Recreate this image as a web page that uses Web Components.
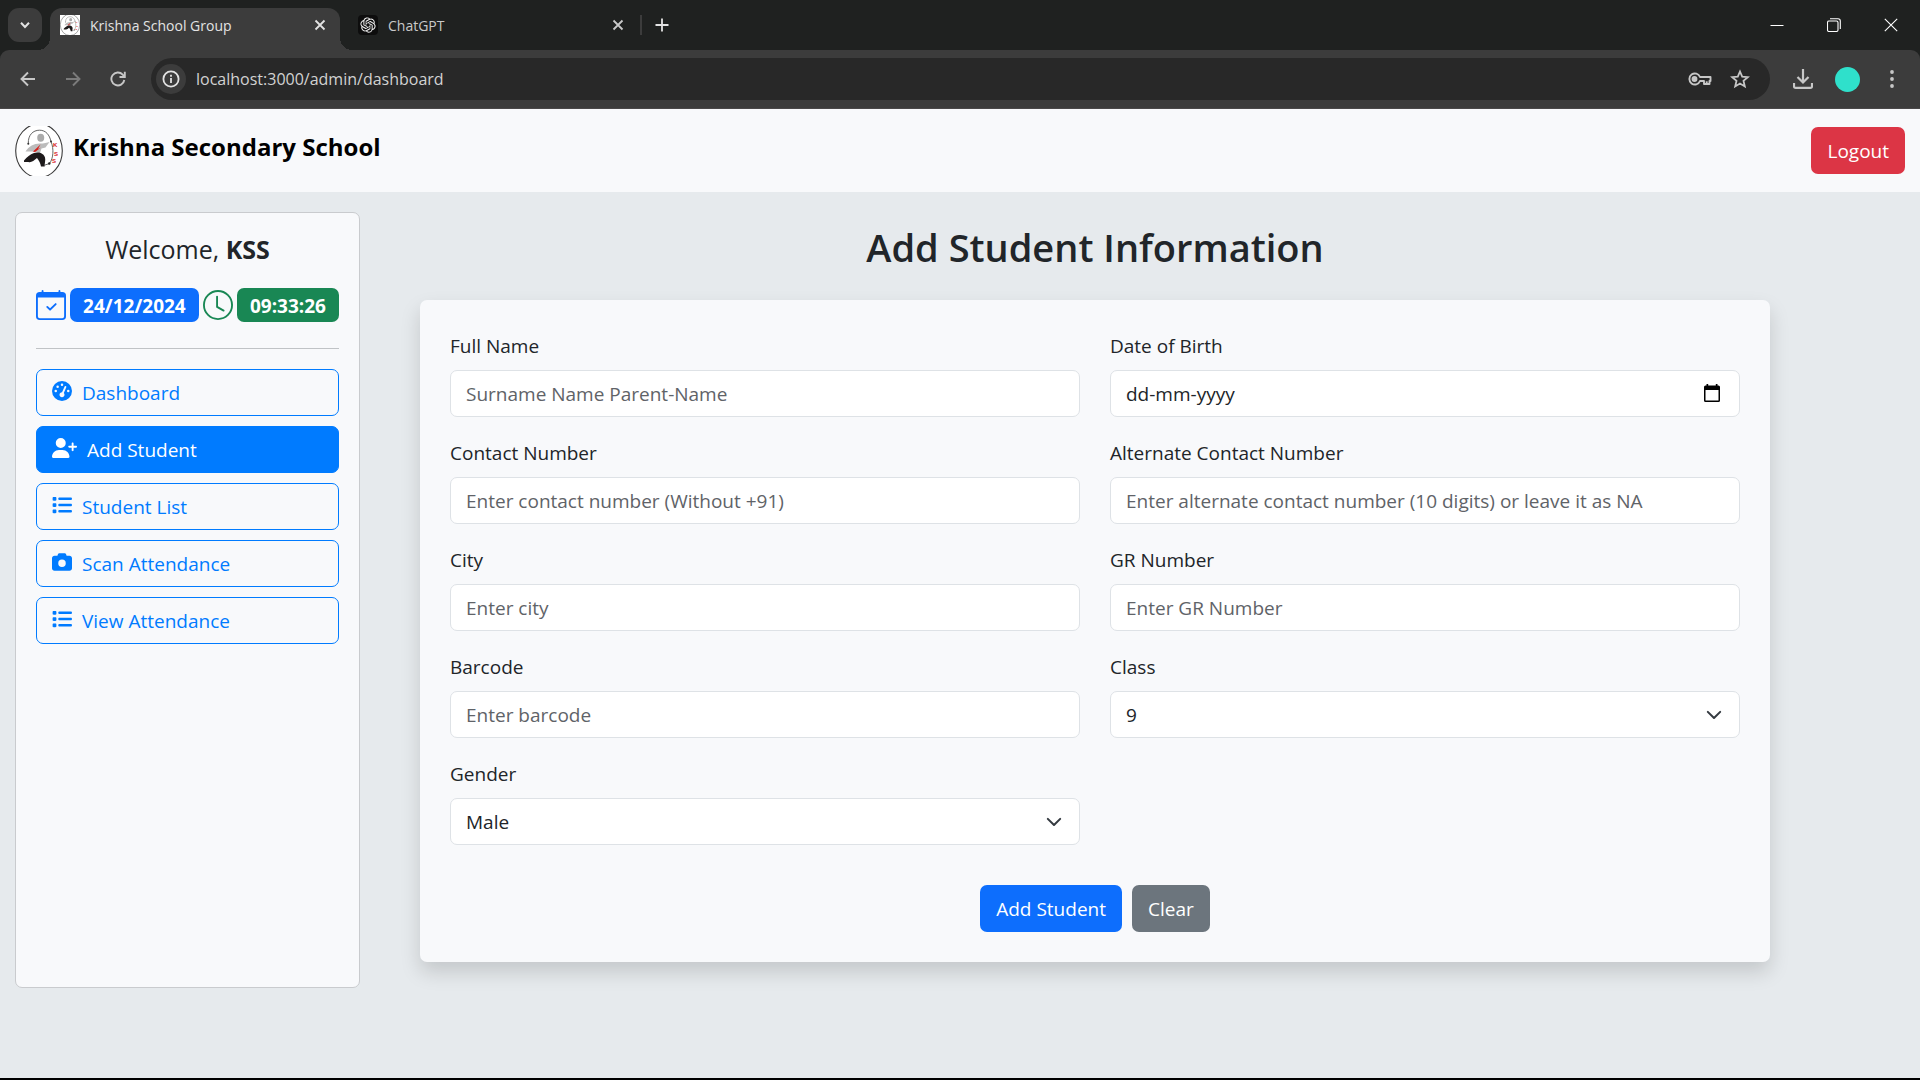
<!DOCTYPE html>
<html lang="en">
<head>
<meta charset="utf-8">
<title>Krishna School Group</title>
<style>
:root{--ui:"Open Sans","Noto Sans",sans-serif;--text:19px;--ink:#212529;--panel:#f8f9fb;--primary:#0d6efd;--nav:#007bff}
html,body{margin:0;height:100%}
body{font-family:var(--ui);font-size:var(--text);line-height:30px;color:var(--ink);background:#e6eaed}
</style>
</head>
<body>
<app-window>
  <tab-strip slot="chrome">
    <browser-tab icon="school" active>Krishna School Group</browser-tab>
    <browser-tab icon="gpt">ChatGPT</browser-tab>
  </tab-strip>
  <browser-toolbar slot="chrome" url="localhost:3000/admin/dashboard"></browser-toolbar>
  <site-header>Krishna Secondary School</site-header>
  <page-layout>
    <side-bar slot="side" user="KSS" date="24/12/2024" time="09:33:26">
      <nav-link icon="gauge">Dashboard</nav-link>
      <nav-link icon="userplus" active>Add Student</nav-link>
      <nav-link icon="list">Student List</nav-link>
      <nav-link icon="camera">Scan Attendance</nav-link>
      <nav-link icon="list">View Attendance</nav-link>
    </side-bar>
    <student-form heading="Add Student Information">
      <form-field label="Full Name" hint="Surname Name Parent-Name"></form-field>
      <form-field label="Date of Birth" kind="date" hint="dd-mm-yyyy"></form-field>
      <form-field label="Contact Number" hint="Enter contact number (Without +91)"></form-field>
      <form-field label="Alternate Contact Number" hint="Enter alternate contact number (10 digits) or leave it as NA"></form-field>
      <form-field label="City" hint="Enter city"></form-field>
      <form-field label="GR Number" hint="Enter GR Number"></form-field>
      <form-field label="Barcode" hint="Enter barcode"></form-field>
      <form-field label="Class" kind="select" options="9,10,11,12"></form-field>
      <form-field label="Gender" kind="select" options="Male,Female"></form-field>
      <action-button slot="actions" tone="primary">Add Student</action-button>
      <action-button slot="actions" tone="secondary">Clear</action-button>
    </student-form>
  </page-layout>
</app-window>
<script>
const svg = (w, h, box, body, extra = '') => `<svg width="${w}" height="${h}" viewBox="${box}" aria-hidden="true" ${extra}>${body}</svg>`;
const line = (w, h, box, body, sw = 2) => svg(w, h, box, body, `fill="none" stroke="currentColor" stroke-width="${sw}"`);
const fill = (w, h, box, d) => svg(w, h, box, `<path d="${d}"/>`, 'fill="currentColor"');
const schoolArt = `
  <ellipse cx="24" cy="24.7" rx="23.3" ry="26.8" fill="#fff" stroke="#3a3a3a" stroke-width="1.1"/>
  <path d="M13.3 17.5C13 9 18 4.200 24.500 4.200C31 4.200 34.500 9 36 15.500C39 23 38.500 32 34.500 37.500L30 39" fill="none" stroke="#555" stroke-width=".9"/>
  <circle cx="13.300" cy="17.800" r="1" fill="#333"/><circle cx="36" cy="15.500" r="1" fill="#333"/><circle cx="34.300" cy="37.500" r="1.200" fill="#222"/>
  <ellipse cx="25.700" cy="11.700" rx="3.500" ry="4" fill="#aaa"/>
  <path d="M10.500 25.500C14 20.500 19 17.500 25 17.600C29 17.600 32 16.500 34.500 16L30.500 21.500L26.500 22.500L25 27L17 25.500Z" fill="#bcbcbc"/>
  <path d="M18 25.500L25.500 18.500L23 23L26 21.500L20 26Z" fill="#d8201c"/>
  <path d="M9 34.500C12 31 15 28.500 19 27C24 25.300 29 27.500 30 31.500C30.800 34.500 29.500 37 29.700 40.500L26 40.500C25.500 37.500 24 34.500 22 32C19 34.500 16 37 13.500 36L9 36Z" fill="#1e1a1b"/>
  <g fill="#d8201c" font-family="Liberation Sans, sans-serif" font-weight="700" font-size="6"><text x="38" y="21">K</text><text x="39" y="30">S</text><text x="37" y="37">S</text></g>`;
const ICONS = {
  school: svg(20, 20, '0 0 48 50', `<rect width="48" height="50" fill="#fff"/>${schoolArt}`, 'preserveAspectRatio="none"'),
  logo: svg(48, 50, '0 0 48 50', schoolArt),
  gpt: svg(20, 20, '0 0 20 20', '<rect width="20" height="20" rx="4" fill="#0d0d0d"/><path transform="translate(2.400 2.400) scale(.635)" fill="#f2f2f2" d="M22.2819 9.8211a5.9847 5.9847 0 0 0-.5157-4.9108 6.0462 6.0462 0 0 0-6.5098-2.9A6.0651 6.0651 0 0 0 4.9807 4.1818a5.9847 5.9847 0 0 0-3.9977 2.9 6.0462 6.0462 0 0 0 .7427 7.0966 5.98 5.98 0 0 0 .511 4.9107 6.051 6.051 0 0 0 6.5146 2.9001A5.9847 5.9847 0 0 0 13.2599 24a6.0557 6.0557 0 0 0 5.7718-4.2058 5.9894 5.9894 0 0 0 3.9977-2.9001 6.0557 6.0557 0 0 0-.7475-7.0729zm-9.022 12.6081a4.4755 4.4755 0 0 1-2.8764-1.0408l.1419-.0804 4.7783-2.7582a.7948.7948 0 0 0 .3927-.6813v-6.7369l2.02 1.1686a.071.071 0 0 1 .038.052v5.5826a4.504 4.504 0 0 1-4.4945 4.4944zm-9.6607-4.1254a4.4708 4.4708 0 0 1-.5346-3.0137l.142.0852 4.783 2.7582a.7712.7712 0 0 0 .7806 0l5.8428-3.3685v2.3324a.0804.0804 0 0 1-.0332.0615L9.74 19.9502a4.4992 4.4992 0 0 1-6.1408-1.6464zM2.3408 7.8956a4.485 4.485 0 0 1 2.3655-1.9728V11.6a.7664.7664 0 0 0 .3879.6765l5.8144 3.3543-2.0201 1.1685a.0757.0757 0 0 1-.071 0l-4.8303-2.7865A4.504 4.504 0 0 1 2.3408 7.872zm16.5963 3.8558L13.1038 8.364 15.1192 7.2a.0757.0757 0 0 1 .071 0l4.8303 2.7913a4.4944 4.4944 0 0 1-.6765 8.1042v-5.6772a.79.79 0 0 0-.407-.667zm2.0107-3.0231l-.142-.0852-4.7735-2.7818a.7759.7759 0 0 0-.7854 0L9.409 9.2297V6.8974a.0662.0662 0 0 1 .0284-.0615l4.8303-2.7866a4.4992 4.4992 0 0 1 6.6802 4.66zM8.3065 12.863l-2.02-1.1638a.0804.0804 0 0 1-.038-.0567V6.0742a4.4992 4.4992 0 0 1 7.3757-3.4537l-.142.0805L8.704 5.459a.7948.7948 0 0 0-.3927.6813zm1.0976-2.3654l2.602-1.4998 2.6069 1.4998v2.9994l-2.5974 1.4997-2.6067-1.4997Z"/>'),
  down: line(12, 12, '0 0 12 12', '<path d="M2 3.800L6 8L10 3.800"/>'),
  close: line(12, 12, '0 0 12 12', '<path d="M1.500 1.500L10.500 10.500M10.500 1.500L1.500 10.500"/>', 1.8),
  plus: line(14, 14, '0 0 14 14', '<path d="M7 0.500V13.500M0.500 7H13.500"/>', 1.8),
  min: line(14, 14, '0 0 14 14', '<path d="M0.500 7.500H13.500"/>', 1),
  restore: line(14, 14, '0 0 14 14', '<rect x="0.500" y="3" width="10.500" height="10.500" rx="1.500"/><path d="M3 .8H11Q13.300 .8 13.300 3V11"/>', 1.1),
  winclose: line(14, 14, '0 0 14 14', '<path d="M0.800 0.800L13.200 13.200M13.200 0.800L0.800 13.200"/>', 1.1),
  back: line(16, 16, '0 0 16 16', '<path d="M15 8H1.800M8 1.500L1.500 8L8 14.500"/>', 1.9),
  fwd: line(16, 16, '0 0 16 16', '<path d="M1 8H14.200M8 1.500L14.500 8L8 14.500"/>', 1.9),
  reload: line(16, 16, '0 0 16 16', '<path d="M14.300 9A6.500 6.500 0 1 1 12.700 3.600L14.500 5.500M14.800 .8V6H9.500"/>', 1.9),
  info: line(18, 18, '0 0 18 18', '<circle cx="9" cy="9" r="7.600"/><path d="M9 8V13M9 4.800V6.700"/>', 1.8),
  key: line(24, 16, '0 0 24 16', '<path d="M12 6A5.500 5.500 0 1 0 12 10H16V13H21.500V10H22.500V6Z" stroke-linejoin="round"/><circle cx="6.500" cy="8" r="2" fill="currentColor"/><path d="M18.700 13V10.300"/>', 1.9),
  star: line(20, 20, '0 0 20 20', '<path d="M10 2.500L12.200 7.700L17.800 8.200L13.500 11.900L14.800 17.400L10 14.500L5.200 17.400L6.500 11.900L2.200 8.200L7.800 7.700Z"/>', 1.8),
  download: line(20, 20, '0 0 20 20', '<path d="M10 0V13M4.500 8L10 13.500L15.500 8M1 14V17.500Q1 18.800 2.500 18.800H17.500Q19 18.800 19 17.500V14"/>', 2.2),
  dots: svg(4, 18, '0 0 4 18', '<circle cx="2" cy="2" r="1.900"/><circle cx="2" cy="9" r="1.900"/><circle cx="2" cy="16" r="1.900"/>', 'fill="currentColor"'),
  calcheck: fill(30, 30, '0 0 16 16', 'M10.854 7.146a.5.5 0 0 1 0 .708l-3 3a.5.5 0 0 1-.708 0l-1.500-1.500a.5.5 0 1 1 .708-.708L7.500 9.793l2.646-2.647a.5.5 0 0 1 .708 0zM3.500 0a.5.5 0 0 1 .5.5V1h8V.5a.5.5 0 0 1 1 0V1h1a2 2 0 0 1 2 2v11a2 2 0 0 1-2 2H2a2 2 0 0 1-2-2V3a2 2 0 0 1 2-2h1V.5a.5.5 0 0 1 .5-.5zM1 4v10a1 1 0 0 0 1 1h12a1 1 0 0 0 1-1V4z'),
  clock: fill(30, 30, '0 0 16 16', 'M8 3.500a.5.5 0 0 0-1 0V9a.5.5 0 0 0 .252.434l3.500 2a.5.5 0 0 0 .496-.868L8 8.710zM8 16A8 8 0 1 0 8 0a8 8 0 0 0 0 16zm7-8A7 7 0 1 1 1 8a7 7 0 0 1 14 0z'),
  gauge: fill(20, 20, '0 0 512 512', 'M0 256a256 256 0 1 1 512 0A256 256 0 1 1 0 256zM288 96a32 32 0 1 0 -64 0 32 32 0 1 0 64 0zM256 416c35.300 0 64-28.700 64-64c0-17.400-6.900-33.100-18.100-44.600L366 161.700c5.300-12.100-.2-26.300-12.300-31.600s-26.300 .2-31.600 12.300L257.900 288c-.6 0-1.300 0-1.900 0c-35.300 0-64 28.700-64 64s28.700 64 64 64zM176 144a32 32 0 1 0 -64 0 32 32 0 1 0 64 0zM96 288a32 32 0 1 0 0-64 32 32 0 1 0 0 64zm352-32a32 32 0 1 0 -64 0 32 32 0 1 0 64 0z'),
  userplus: fill(25, 20, '0 0 640 512', 'M96 128a128 128 0 1 1 256 0A128 128 0 1 1 96 128zM0 482.300C0 383.800 79.800 304 178.300 304h91.400C368.200 304 448 383.800 448 482.300c0 16.400-13.300 29.700-29.700 29.700H29.700C13.300 512 0 498.700 0 482.300zM504 312V248H440c-13.300 0-24-10.700-24-24s10.700-24 24-24h64V136c0-13.300 10.700-24 24-24s24 10.700 24 24v64h64c13.300 0 24 10.700 24 24s-10.700 24-24 24H552v64c0 13.300-10.700 24-24 24s-24-10.700-24-24z'),
  list: fill(20, 20, '0 0 512 512', 'M40 48C26.700 48 16 58.700 16 72v48c0 13.300 10.700 24 24 24H88c13.300 0 24-10.700 24-24V72c0-13.300-10.700-24-24-24H40zM192 64c-17.700 0-32 14.300-32 32s14.300 32 32 32H480c17.700 0 32-14.300 32-32s-14.300-32-32-32H192zm0 160c-17.700 0-32 14.300-32 32s14.300 32 32 32H480c17.700 0 32-14.300 32-32s-14.300-32-32-32H192zm0 160c-17.700 0-32 14.300-32 32s14.300 32 32 32H480c17.700 0 32-14.300 32-32s-14.300-32-32-32H192zM16 232v48c0 13.300 10.700 24 24 24H88c13.300 0 24-10.700 24-24V232c0-13.300-10.700-24-24-24H40c-13.300 0-24 10.700-24 24zM40 368c-13.300 0-24 10.700-24 24v48c0 13.300 10.700 24 24 24H88c13.300 0 24-10.700 24-24V392c0-13.300-10.700-24-24-24H40z'),
  camera: fill(20, 20, '0 0 512 512', 'M149.100 64.800L138.700 96H64C28.700 96 0 124.700 0 160V416c0 35.300 28.700 64 64 64H448c35.300 0 64-28.700 64-64V160c0-35.300-28.700-64-64-64H373.300L362.900 64.800C356.400 45.200 338.100 32 317.400 32H194.600c-20.700 0-39 13.200-45.500 32.800zM256 192a96 96 0 1 1 0 192 96 96 0 1 1 0-192z'),
  calendar: svg(16, 18, '0 0 16 18', '<path fill-rule="evenodd" d="M2.500 0H4.200V1.500H11.800V0H13.500V1.500H14.500Q16 1.500 16 3V16.500Q16 18 14.500 18H1.500Q0 18 0 16.500V3Q0 1.500 1.500 1.500H2.500ZM1.500 6V16.500H14.500V6Z"/>', 'fill="#000"'),
  chevron: line(18, 18, '0 0 16 16', '<path d="M2.500 5.200L8 10.700L13.500 5.200" stroke-linecap="round" stroke-linejoin="round"/>', 1.8),
};
const BASE = `*{box-sizing:border-box}svg{display:block;flex:none}
button,input,select{font:inherit;color:inherit;margin:0}
button{background:none;border:0;padding:0;cursor:pointer;display:grid;place-items:center}`;
function define(name, css, view) {
  customElements.define(name, class extends HTMLElement {
    constructor() { super(); this.attachShadow({ mode: 'open' }); }
    connectedCallback() {
      this.shadowRoot.innerHTML = `<style>${BASE}${css}</style>${view(this)}`;
    }
  });
}
const attr = (el, n) => el.getAttribute(n) || '';

define('app-window', `
  :host{display:flex;flex-direction:column;min-height:100vh;border-bottom:2px solid #000;box-sizing:border-box}
  main{flex:1;display:flex;flex-direction:column}`,
  () => `<slot name="chrome"></slot><main><slot></slot></main>`);

define('tab-strip', `
  :host{display:flex;align-items:stretch;height:50px;padding:0 1px 0 8px;box-sizing:border-box;background:#1f2120;color:#e3e3e3;font-size:14px;line-height:20px}
  .search{width:34px;height:34px;margin:8px 8px 0 0;border-radius:11px;background:#3c3c3c}
  .tabs{display:flex}
  .rule{align-self:center;width:2px;height:20px;background:#3c3c3c;margin-right:11px}
  .new{width:18px}
  .win{margin-left:auto;display:flex}
  .win button{width:57px;color:#fff}`,
  () => `<button class="search" aria-label="Search tabs">${ICONS.down}</button>
  <div class="tabs"><slot></slot></div><span class="rule"></span>
  <button class="new" aria-label="New tab">${ICONS.plus}</button>
  <div class="win"><button aria-label="Minimize">${ICONS.min}</button><button aria-label="Restore">${ICONS.restore}</button><button aria-label="Close">${ICONS.winclose}</button></div>`);

define('browser-tab', `
  :host{display:flex;align-items:center;gap:10px;width:300px;padding:0 16px 0 18px;box-sizing:border-box}
  :host([active]){position:relative;width:290px;margin-top:8px;padding:0 14px 8px 10px;border-radius:12px 12px 0 0;background:#3c3c3c}
  :host([active])::before,:host([active])::after{content:"";position:absolute;bottom:0;width:12px;height:12px}
  :host([active])::before{right:100%;background:radial-gradient(circle at 0 0,transparent 12px,#3c3c3c 12px)}
  :host([active])::after{left:100%;background:radial-gradient(circle at 100% 0,transparent 12px,#3c3c3c 12px)}
  :host(:not([active])){color:#c9c9c9}
  .title{flex:1;padding-top:2px}`,
  el => `${ICONS[attr(el, 'icon')]}<span class="title"><slot></slot></span><button aria-label="Close tab">${ICONS.close}</button>`);

define('browser-toolbar', `
  :host{display:block;background:#1f2120;color:#c7c7c7}
  .bar{display:flex;align-items:center;height:59px;padding:0 26px 0 20px;border-radius:9px 9px 0 0;background:#3c3c3c;border-bottom:1px solid #4a4849}
  .bar>button{width:16px;height:30px;margin-right:29px}
  .bar>.fwd{color:#7b7b7b}
  .bar>.reload{margin-right:25px}
  .omni{flex:1;display:flex;align-items:center;height:42px;padding:0 20px 0 5px;border-radius:21px;background:#282828}
  .info{width:30px;height:30px;border-radius:50%;background:#3c3c3c;color:#e3e3e3}
  input{flex:1;border:0;outline:0;padding:0 0 0 10px;height:30px;font-size:16px;color:#d2d2d2;background:none}
  .omni .key{margin-right:18px}
  .bar>.dl{width:20px;margin:0 22px 0 23px}
  .bar>.me{width:25px;height:25px;border-radius:50%;background:#2fe0cb;margin-right:30px}
  .bar>.more{width:4px;margin:0}`,
  el => `<div class="bar"><button aria-label="Back">${ICONS.back}</button><button class="fwd" aria-label="Forward">${ICONS.fwd}</button><button class="reload" aria-label="Reload">${ICONS.reload}</button>
  <div class="omni"><button class="info" aria-label="Site information">${ICONS.info}</button><input type="text" aria-label="Address" value="${attr(el, 'url')}">
  <button class="key" aria-label="Passwords">${ICONS.key}</button><button aria-label="Bookmark">${ICONS.star}</button></div>
  <button class="dl" aria-label="Downloads">${ICONS.download}</button><button class="me" aria-label="Profile"></button><button class="more" aria-label="Menu">${ICONS.dots}</button></div>`);

define('site-header', `
  :host{display:flex;align-items:center;justify-content:space-between;height:83px;padding:0 15px;box-sizing:border-box;background:var(--panel)}
  a{display:flex;align-items:center;gap:10px;color:#000;text-decoration:none;font-size:24px;font-weight:700}
  span{padding-bottom:7px}`,
  () => `<a href="#">${ICONS.logo}<span><slot></slot></span></a><action-button tone="danger">Logout</action-button>`);

define('action-button', `
  :host{display:block}
  button{height:47px;padding:0 16px;border-radius:7px;color:#fff;line-height:30px;background:var(--primary)}
  :host([tone=secondary]) button{background:#6c757d}
  :host([tone=danger]) button{background:#dc3545}`,
  () => `<button type="button"><slot></slot></button>`);

define('page-layout', `
  :host{flex:1;display:flex;gap:60px;padding:20px 15px 90px}
  aside{flex:0 0 345px;display:flex}
  section{flex:1;margin-right:135px}`,
  () => `<aside><slot name="side"></slot></aside><section><slot></slot></section>`);

define('side-bar', `
  :host{flex:1;display:block;padding:20px;border:1px solid #c9cbce;border-radius:7px;background:var(--panel);box-sizing:border-box}
  h2{margin:0 0 23px;font-size:25px;line-height:32px;font-weight:500;text-align:center}
  .now{display:flex;justify-content:space-between;align-items:center;color:var(--primary)}
  .now .clock{color:#198754}
  .badge{height:34px;padding:0 13px;border-radius:7px;background:var(--primary);color:#fff;line-height:36px;font-weight:700}
  .time{background:#198754}
  hr{border:0;height:1px;margin:26px 0 20px;background:#c0c3c6}
  nav{display:grid;gap:10px}`,
  el => `<h2>Welcome, <b>${attr(el, 'user')}</b></h2>
  <div class="now">${ICONS.calcheck}<span class="badge">${attr(el, 'date')}</span><span class="clock">${ICONS.clock}</span><span class="badge time">${attr(el, 'time')}</span></div>
  <hr><nav><slot></slot></nav>`);

define('nav-link', `
  :host{display:block}
  a{display:flex;align-items:center;gap:10px;height:47px;padding:0 15px;border:1px solid var(--nav);border-radius:7px;color:var(--nav);text-decoration:none}
  svg{margin-bottom:3px}
  :host([active]) a{background:var(--nav);color:#fff}`,
  el => `<a href="#">${ICONS[attr(el, 'icon')]}<span><slot></slot></span></a>`);

define('student-form', `
  :host{display:block}
  h1{margin:10px 0 28px;font-size:38px;line-height:50px;font-weight:600;text-align:center}
  form{padding:30px;border-radius:7px;background:var(--panel);box-shadow:0 10px 20px rgba(0,0,0,.15)}
  .grid{display:grid;grid-template-columns:1fr 1fr;gap:20px 30px}
  .actions{display:flex;justify-content:center;gap:10px;margin-top:40px}`,
  el => `<h1>${attr(el, 'heading')}</h1><form><div class="grid"><slot></slot></div><div class="actions"><slot name="actions"></slot></div></form>`);

define('form-field', `
  :host{display:grid;gap:10px}
  label{height:30px;line-height:32px}
  .box{display:grid;align-items:center}
  .box>*{grid-area:1/1}
  input,select{width:100%;height:47px;padding:0 15px;border:1px solid #dee2e6;border-radius:7px;background:#fff;color:var(--ink);appearance:none;outline:0}
  input::placeholder{color:#5f6368;opacity:1}
  :host([kind=date]) input::placeholder{color:var(--ink)}
  .end{justify-self:end;margin-right:17px;color:#343a40;z-index:1}
  div.end{pointer-events:none}
  button.end{margin:0 20px 2px 0}`,
  el => {
    const kind = attr(el, 'kind');
    const control = kind === 'select'
      ? `<select id="c">${attr(el, 'options').split(',').map(o => `<option>${o}</option>`).join('')}</select><div class="end">${ICONS.chevron}</div>`
      : `<input id="c" type="text" placeholder="${attr(el, 'hint')}">${kind === 'date' ? `<button type="button" class="end" aria-label="Open calendar">${ICONS.calendar}</button>` : ''}`;
    return `<label for="c">${attr(el, 'label')}</label><div class="box">${control}</div>`;
  });
</script>
</body>
</html>
